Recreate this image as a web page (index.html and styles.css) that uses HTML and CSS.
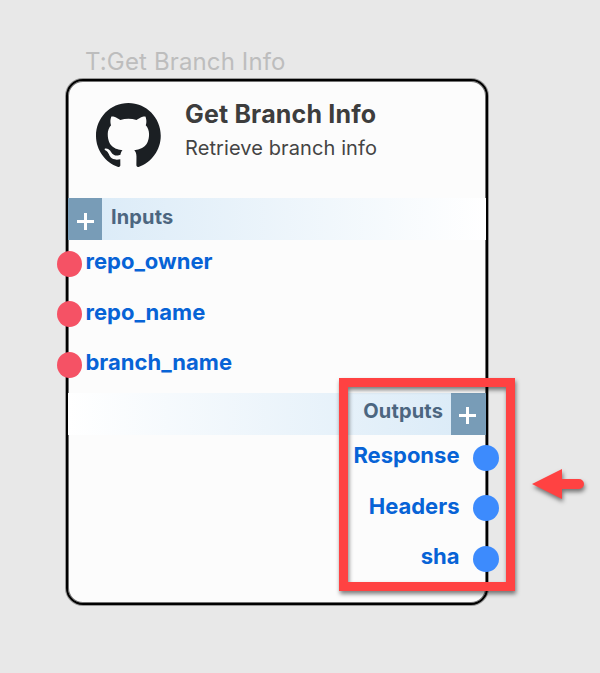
FILE: index.html
```html
<!DOCTYPE html>
<html lang="en">
<head>
<meta charset="utf-8">
<title>Get Branch Info</title>
<link rel="stylesheet" href="styles.css">
</head>
<body>
<main class="canvas">
  <div class="node-label"><span>T:Get Branch Info</span></div>
  <section class="node">
    <header class="head">
      <svg class="logo" viewBox="0 0 98 96" preserveAspectRatio="none"><path fill="#1b1f23" fill-rule="evenodd" d="M48.854 0C21.839 0 0 22 0 49.217c0 21.756 13.993 40.172 33.405 46.69 2.427.49 3.316-1.059 3.316-2.362 0-1.141-.08-5.052-.08-9.127-13.59 2.934-16.42-5.867-16.42-5.867-2.184-5.704-5.42-7.17-5.42-7.17-4.448-3.015.324-3.015.324-3.015 4.934.326 7.523 5.052 7.523 5.052 4.367 7.496 11.404 5.378 14.235 4.074.404-3.178 1.699-5.378 3.074-6.6-10.839-1.141-22.243-5.378-22.243-24.283 0-5.378 1.94-9.778 5.014-13.2-.485-1.222-2.184-6.275.486-13.038 0 0 4.125-1.304 13.426 5.052a46.97 46.97 0 0 1 12.214-1.63c4.125 0 8.33.571 12.213 1.63 9.302-6.356 13.427-5.052 13.427-5.052 2.67 6.763.97 11.816.485 13.038 3.155 3.422 5.015 7.822 5.015 13.2 0 18.905-11.404 23.06-22.324 24.283 1.78 1.548 3.316 4.481 3.316 9.126 0 6.6-.08 11.897-.08 13.526 0 1.304.89 2.853 3.316 2.364 19.412-6.52 33.405-24.935 33.405-46.691C97.707 22 75.788 0 48.854 0z"/></svg>
      <div class="titles">
        <h1>Get Branch Info</h1>
        <p>Retrieve branch info</p>
      </div>
    </header>
    <div class="bar bar-in">
      <span class="add"><svg viewBox="0 0 17 17"><path d="M8.5 0v17M0 8.5h17"/></svg></span>
      <span class="bar-name">Inputs</span>
    </div>
    <ul class="ports ports-in">
      <li><i class="dot"></i><span>repo_owner</span></li>
      <li><i class="dot"></i><span>repo_name</span></li>
      <li><i class="dot"></i><span>branch_name</span></li>
    </ul>
    <div class="bar bar-out">
      <span class="bar-name">Outputs</span>
      <span class="add"><svg viewBox="0 0 17 17"><path d="M8.5 0v17M0 8.5h17"/></svg></span>
    </div>
    <ul class="ports ports-out">
      <li><span>Response</span><i class="dot"></i></li>
      <li><span>Headers</span><i class="dot"></i></li>
      <li><span>sha</span><i class="dot"></i></li>
    </ul>
  </section>
  <div class="highlight"></div>
  <svg class="arrow" viewBox="0 0 54 32"><path d="M0 16 30 1v10h17a5 5 0 0 1 0 10H30v10z" fill="#ff4242"/></svg>
</main>
</body>
</html>
```

FILE: styles.css
```css
* { box-sizing: border-box; }
body {
  margin: 0;
  background: #e8e8e8;
  font-family: Inter, "Liberation Sans", sans-serif;
}
.canvas {
  position: relative;
  width: 600px;
  height: 673px;
  padding: 46px 0 0 66px;
  overflow: hidden;
}
.node-label {
  height: 33px;
  padding-left: 19px;
  font-size: 24px;
  line-height: 32px;
  letter-spacing: .13px;
  color: #bdbdbd;
  white-space: nowrap;
}
.node {
  width: 422px;
  height: 526px;
  border: 2px solid #000;
  border-radius: 17px;
  background: #fcfcfc;
  box-shadow: 0 0 0 1px rgba(0, 0, 0, .35), inset 0 0 0 1px rgba(0, 0, 0, .55);
}
.head {
  display: flex;
  height: 117px;
  padding: 22px 0 0 28px;
}
.logo { width: 65px; height: 64px; }
.titles { padding-left: 24px; white-space: nowrap; }
h1 {
  margin: -7px 0 0;
  font-size: 25px;
  line-height: 36px;
  font-weight: 700;
  letter-spacing: .17px;
  color: #3d3d3d;
}
p {
  margin: 1px 0 0;
  font-size: 20px;
  line-height: 30px;
  letter-spacing: .1px;
  color: #444;
}
.bar { display: flex; height: 42px; }
.bar-in { background: linear-gradient(90deg, #d9eaf7, #fff); }
.bar-out { background: linear-gradient(270deg, #d9eaf7, #fff); justify-content: flex-end; }
.add {
  display: flex;
  align-items: center;
  justify-content: center;
  width: 34px;
  padding-top: 4px;
  background: #789cb7;
}
.bar-out .add { width: 35px; padding: 3px 2px 0 0; }
.add svg { width: 17px; height: 17px; stroke: #fff; stroke-width: 3; }
.bar-name {
  padding: 0 9px;
  font-size: 20px;
  line-height: 38px;
  font-weight: 700;
  letter-spacing: .15px;
  color: #4c6680;
}
.bar-out .bar-name { padding-right: 8px; line-height: 36px; }
.ports {
  margin: 0;
  padding: 0;
  list-style: none;
  font-size: 22px;
  font-weight: 700;
  color: #0763d6;
}
.ports-in { height: 153px; }
.ports li {
  display: flex;
  align-items: center;
  height: 50.5px;
}
.ports span { line-height: 30px; margin-top: -8px; }
.dot {
  flex: none;
  width: 25px;
  height: 26px;
  border-radius: 50%;
  margin-top: -3px;
}
.ports-in .dot { margin-left: -11px; margin-right: 3.5px; background: #f55265; }
.ports-out { margin-top: -1px; }
.ports-out li { justify-content: flex-end; }
.ports-out .dot { width: 26px; margin-left: 13.5px; margin-right: -13px; background: #3d8bfd; }
.highlight {
  position: absolute;
  left: 339px;
  top: 378px;
  width: 176px;
  height: 213px;
  border: 9px solid #ff4242;
  filter: drop-shadow(1px 3px 2px rgba(0, 0, 0, .5));
}
.arrow {
  position: absolute;
  left: 532px;
  top: 468px;
  width: 54px;
  height: 32px;
  overflow: visible;
  filter: drop-shadow(1px 3px 2px rgba(0, 0, 0, .5));
}
```
